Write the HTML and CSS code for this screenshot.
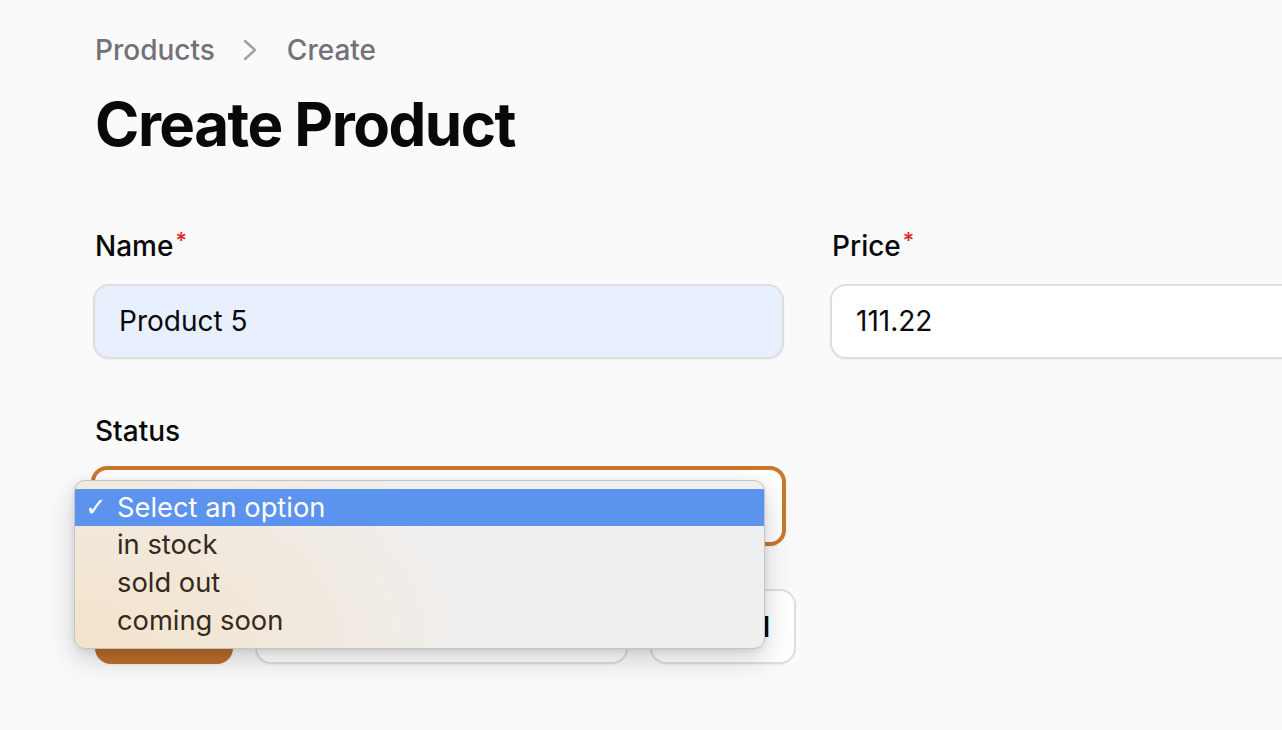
FILE: index.html
```html
<!DOCTYPE html>
<html lang="en">
<head>
<meta charset="utf-8">
<title>Create Product</title>
<link rel="stylesheet" href="styles.css">
</head>
<body>
<main class="page">
  <nav class="breadcrumbs">
    <span class="crumb">Products</span>
    <svg class="chev" width="14" height="22" viewBox="0 0 14 22" fill="none"><path d="M2 2l10 9-10 9" stroke="#a1a1aa" stroke-width="2.4" stroke-linecap="round" stroke-linejoin="round"/></svg>
    <span class="crumb">Create</span>
  </nav>
  <h1 class="title">Create Product</h1>

  <form class="form">
    <div class="grid">
      <div class="field">
        <label class="label">Name<sup class="req">*</sup></label>
        <div class="input autofill">Product 5</div>
      </div>
      <div class="field">
        <label class="label">Price<sup class="req">*</sup></label>
        <div class="input">111.22</div>
      </div>
      <div class="field">
        <label class="label">Status</label>
        <div class="select-wrap">
          <div class="input select focused"></div>
          <div class="popup">
            <div class="opt selected"><span class="check">✓</span>Select an option</div>
            <div class="opt">in stock</div>
            <div class="opt">sold out</div>
            <div class="opt">coming soon</div>
          </div>
        </div>
      </div>
    </div>

    <div class="actions">
      <button type="button" class="btn primary">Create</button>
      <button type="button" class="btn">Create &amp; create another</button>
      <button type="button" class="btn">Cancel</button>
    </div>
  </form>
</main>
</body>
</html>
```

FILE: styles.css
```css
* { box-sizing: border-box; }
html, body { margin: 0; padding: 0; }
body {
  background: #fafafa;
  font-family: Inter, "Noto Sans", sans-serif;
  color: #09090b;
  overflow: hidden;
  width: 1282px;
  height: 730px;
}
.page {
  padding: 30px 0 0 95px;
}
.breadcrumbs {
  display: flex;
  align-items: center;
  height: 40px;
}
.crumb {
  font-size: 28px;
  font-weight: 500;
  color: #71717a;
}
.chev { margin: 0 30px 0 28px; }
.title {
  margin: 18px 0 0 0;
  font-size: 60px;
  line-height: 72px;
  font-weight: 700;
  letter-spacing: -1.5px;
  color: #09090b;
}
.form { margin-top: 66px; margin-left: -2px; }
.grid {
  display: grid;
  grid-template-columns: 691px 691px;
  column-gap: 46px;
  row-gap: 52px;
}
.field { display: flex; flex-direction: column; gap: 18px; }
.label {
  font-size: 28px;
  font-weight: 500;
  line-height: 40px;
  height: 40px;
  padding-left: 2px;
  color: #09090b;
}
.req {
  color: #dc2626;
  font-size: 22px;
  vertical-align: top;
  position: relative;
  top: -6px;
  margin-left: 2px;
}
.input {
  height: 75px;
  border: 2px solid #dedede;
  border-radius: 16px;
  background: #ffffff;
  font-size: 28px;
  line-height: 71px;
  padding: 0 24px;
  box-shadow: 0 1px 2px rgba(0,0,0,0.05);
}
.input.autofill { background: #e8f0fe; }
.select-wrap { position: relative; }
.select.focused {
  height: 80px;
  margin-top: -3px;
  margin-left: -2px;
  width: 695px;
  border: 4px solid #c8782f;
}
.popup {
  position: absolute;
  left: -19px;
  top: 11px;
  width: 691px;
  height: 169px;
  padding-top: 8px;
  border-radius: 11px;
  border: 1px solid #c4c4c4;
  background:
    radial-gradient(ellipse 420px 260px at 0% 100%, rgba(244,226,200,0.95), rgba(240,238,236,0) 100%),
    #efefef;
  box-shadow: 0 10px 28px rgba(0,0,0,0.18), 0 2px 6px rgba(0,0,0,0.08);
  overflow: hidden;
  z-index: 2;
}
.opt {
  position: relative;
  height: 38px;
  line-height: 38px;
  padding-left: 42px;
  font-size: 27.3px;
  color: #35291e;
}
.opt.selected {
  background: #5b93ee;
  color: #ffffff;
  height: 37px;
  line-height: 37px;
}
.check {
  position: absolute;
  left: 10px;
  top: 0;
  font-family: "DejaVu Sans", sans-serif;
  font-size: 26px;
  font-weight: 300;
}
.actions {
  display: flex;
  gap: 22px;
  margin-top: 43px;
  margin-left: 2px;
}
.btn {
  height: 75px;
  padding: 0 24px;
  border-radius: 16px;
  font-family: Inter, "Noto Sans", sans-serif;
  font-size: 28px;
  font-weight: 600;
  border: 2px solid #dedede;
  background: #ffffff;
  color: #09090b;
  box-shadow: 0 1px 2px rgba(0,0,0,0.05);
}
.btn.primary {
  padding: 0 22px;
  background: #bd6e2b;
  border-color: #bd6e2b;
  color: #ffffff;
}
```
